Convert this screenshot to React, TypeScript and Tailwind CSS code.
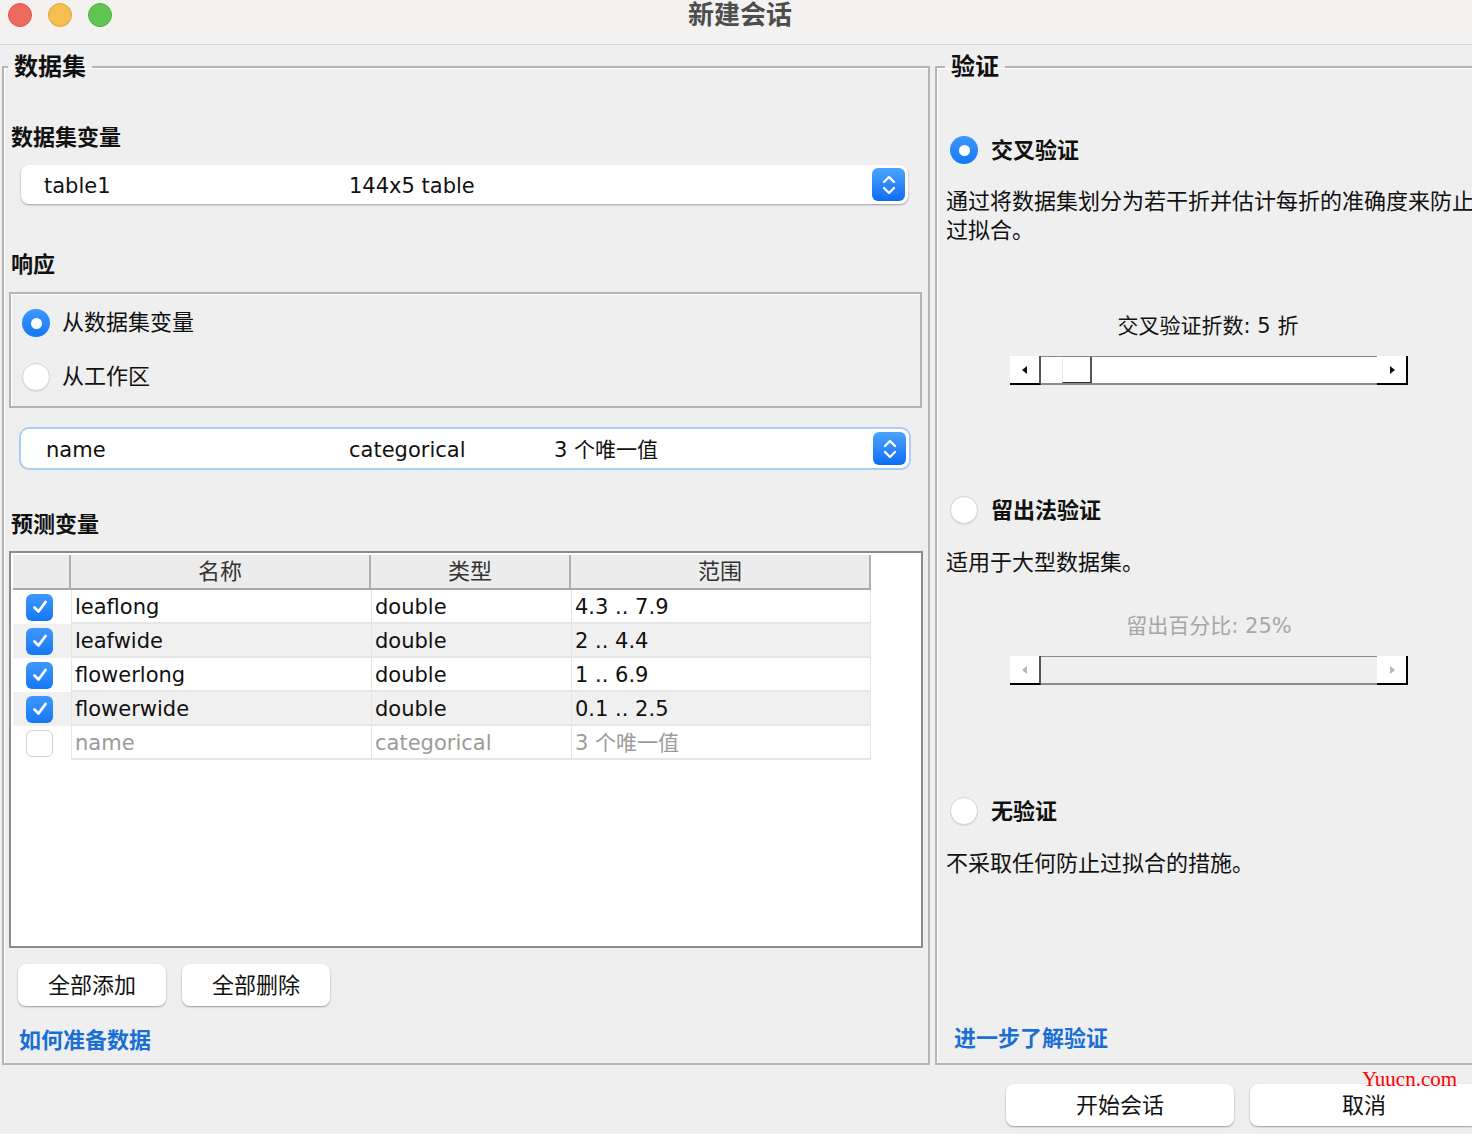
import React from "react";

const FONT = { fontFamily: '"DejaVu Sans", "Noto Sans CJK SC", sans-serif' };

function Chevrons() {
  return (
    <svg width="16" height="22" viewBox="0 0 16 22" fill="none" stroke="white" strokeWidth="2.4" strokeLinecap="round" strokeLinejoin="round">
      <path d="M3 8 L8 3 L13 8" />
      <path d="M3 14 L8 19 L13 14" />
    </svg>
  );
}

function Select({ cells, focused }: { cells: { text: string; x: number }[]; focused?: boolean }) {
  return (
    <div
      className={`relative flex items-center bg-white rounded-[8px] h-[39px] ${
        focused
          ? "shadow-[0_0_0_2px_#a9cdf6,0_1px_2px_rgba(0,0,0,0.2)]"
          : "shadow-[0_1px_2px_rgba(0,0,0,0.35)]"
      }`}
    >
      {cells.map((c) => (
        <span key={c.text} className="absolute top-[6px] leading-[30px] text-[21px] text-[#111]" style={{ left: c.x }}>
          {c.text}
        </span>
      ))}
      <div className="absolute right-[3px] top-[3px] w-[33px] h-[33px] rounded-[6px] bg-gradient-to-b from-[#4ca3ff] to-[#0a6cf5] flex items-center justify-center">
        <Chevrons />
      </div>
    </div>
  );
}

function Radio({ checked }: { checked?: boolean }) {
  return checked ? (
    <div className="w-[28px] h-[28px] rounded-full bg-gradient-to-b from-[#3d98fd] to-[#1577f6] flex items-center justify-center shrink-0">
      <div className="w-[11px] h-[11px] rounded-full bg-white" />
    </div>
  ) : (
    <div className="w-[28px] h-[28px] rounded-full bg-white border border-[#d4d4d4] shadow-[0_1px_1px_rgba(0,0,0,0.08)] shrink-0" />
  );
}

function Check({ checked }: { checked: boolean }) {
  return checked ? (
    <div className="w-[27px] h-[27px] rounded-[6px] bg-gradient-to-b from-[#3d98fd] to-[#1577f6] flex items-center justify-center">
      <svg width="18" height="18" viewBox="0 0 18 18" fill="none" stroke="white" strokeWidth="2.8" strokeLinecap="round" strokeLinejoin="round">
        <path d="M3.5 9.5 L7.5 13.5 L14.5 4" />
      </svg>
    </div>
  ) : (
    <div className="w-[27px] h-[27px] rounded-[6px] bg-white border border-[#d0d0d0]" />
  );
}

function Slider({ enabled }: { enabled: boolean }) {
  const tri = enabled ? "#111" : "#b8b8b8";
  return (
    <div className="flex h-[29px] w-[398px] ml-[64px]">
      <div className="w-[31px] h-full bg-white border-b-2 border-b-black border-r-2 border-r-[#555] flex items-center justify-center">
        <svg width="8" height="10" viewBox="0 0 8 10"><path d="M6 1 L1 5 L6 9 Z" fill={tri} /></svg>
      </div>
      <div className={`flex-1 h-full border-t border-t-[#8a8a8a] border-b-2 border-b-[#8a8a8a] ${enabled ? "bg-white" : "bg-[#efefef]"}`}>
        {enabled && (
          <div className="ml-[21px] w-[30px] h-full bg-white border-l border-l-[#e6e6e6] border-r-2 border-r-[#555] border-b border-b-[#333]" />
        )}
      </div>
      <div className="w-[31px] h-full bg-white border-b-2 border-b-black border-r-2 border-r-black flex items-center justify-center">
        <svg width="8" height="10" viewBox="0 0 8 10"><path d="M2 1 L7 5 L2 9 Z" fill={tri} /></svg>
      </div>
    </div>
  );
}

const rows = [
  { name: "leaflong", type: "double", range: "4.3 .. 7.9", on: true },
  { name: "leafwide", type: "double", range: "2 .. 4.4", on: true },
  { name: "flowerlong", type: "double", range: "1 .. 6.9", on: true },
  { name: "flowerwide", type: "double", range: "0.1 .. 2.5", on: true },
  { name: "name", type: "categorical", range: "3 个唯一值", on: false },
];

function Legend({ children }: { children: React.ReactNode }) {
  return <legend className="-ml-[1px] px-[6px] text-[24px] font-bold leading-[30px] text-[#111]">{children}</legend>;
}

export default function App() {
  return (
    <div className="relative w-[1472px] h-[1134px] overflow-hidden bg-[#efefef]" style={FONT}>
      {/* title bar */}
      <div className="relative h-[45px] bg-[#f3f2f1] border-b border-[#cfcfcf] flex items-center">
        <div className="flex gap-[16px] ml-[8px] -mt-[14px]">
          <div className="w-[24px] h-[24px] rounded-full bg-[#ee6a5e] border border-[#d95a4f]" />
          <div className="w-[24px] h-[24px] rounded-full bg-[#f5bf4f] border border-[#dca73c]" />
          <div className="w-[24px] h-[24px] rounded-full bg-[#61c554] border border-[#50ad44]" />
        </div>
        <div className="absolute left-0 right-0 top-0 text-center text-[26px] font-bold text-[#4d4d4d] leading-[30px] pl-[8px]">新建会话</div>
      </div>

      <div className="flex pt-[7px] h-[1020px]">
        {/* left dataset */}
        <fieldset className="ml-[2px] w-[929px] h-[1013px] border-2 border-[#b4b4b4] shadow-[inset_1px_1px_0_#fff] px-[5px] flex flex-col">
          <Legend>数据集</Legend>
          <div className="mt-[42px] ml-[2px] h-[28px] leading-[28px] text-[22px] font-bold text-[#111]">数据集变量</div>
          <div className="mt-[13px] ml-[12px] w-[887px]">
            <Select cells={[{ text: "table1", x: 23 }, { text: "144x5 table", x: 328 }]} />
          </div>
          <div className="mt-[47px] ml-[2px] h-[28px] leading-[28px] text-[22px] font-bold text-[#111]">响应</div>
          <div className="mt-[13px] h-[116px] w-[913px] border-2 border-[#b4b4b4] shadow-[inset_1px_1px_0_#fff] flex flex-col justify-center gap-[26px] pl-[11px]">
            <div className="flex items-center gap-[12px] h-[28px]">
              <Radio checked />
              <span className="text-[22px] leading-[28px] text-[#111]">从数据集变量</span>
            </div>
            <div className="flex items-center gap-[12px] h-[28px]">
              <Radio />
              <span className="text-[22px] leading-[28px] text-[#111]">从工作区</span>
            </div>
          </div>
          <div className="mt-[21px] ml-[12px] w-[888px]">
            <Select
              focused
              cells={[
                { text: "name", x: 25 },
                { text: "categorical", x: 328 },
                { text: "3 个唯一值", x: 533 },
              ]}
            />
          </div>
          <div className="mt-[43px] ml-[2px] h-[28px] leading-[28px] text-[22px] font-bold text-[#111]">预测变量</div>
          <div className="mt-[12px] h-[397px] w-[914px] border-2 border-[#8c8c8c] bg-white p-[2px]">
            <div className="w-[858px]">
              <div className="grid grid-cols-[58px_300px_200px_300px] h-[35px] bg-[#ececec] border-b-2 border-[#a8a8a8] text-[22px] text-[#333]">
                <div className="border-r-2 border-[#b0b0b0]" />
                <div className="border-r-2 border-[#b0b0b0] flex items-center justify-center">名称</div>
                <div className="border-r-2 border-[#b0b0b0] flex items-center justify-center">类型</div>
                <div className="border-r-2 border-[#b0b0b0] flex items-center justify-center">范围</div>
              </div>
              {rows.map((r, i) => (
                <div
                  key={r.name}
                  className={`grid grid-cols-[58px_300px_200px_300px] grid-rows-[34px] h-[34px] overflow-hidden text-[21px] leading-[26px] ${
                    i % 2 === 1 ? "bg-[#f0f0f0]" : "bg-white"
                  } ${r.on ? "text-[#111]" : "text-[#9b9b9b]"}`}
                >
                  <div className="flex items-center pl-[13px]">
                    <Check checked={r.on} />
                  </div>
                  <div className="border-l border-b-2 border-[#e6e6e6] flex items-center pl-[3px] pt-[2px]">{r.name}</div>
                  <div className="border-l border-b-2 border-[#e6e6e6] flex items-center pl-[3px] pt-[2px]">{r.type}</div>
                  <div className="border-l border-r border-b-2 border-[#e6e6e6] flex items-center pl-[3px] pt-[2px]">{r.range}</div>
                </div>
              ))}
            </div>
          </div>
          <div className="mt-[16px] ml-[9px] flex gap-[16px]">
            <button className="w-[148px] h-[42px] rounded-[8px] bg-white shadow-[0_1px_2px_rgba(0,0,0,0.35)] text-[22px] text-[#111]">全部添加</button>
            <button className="w-[148px] h-[42px] rounded-[8px] bg-white shadow-[0_1px_2px_rgba(0,0,0,0.35)] text-[22px] text-[#111]">全部删除</button>
          </div>
          <div className="mt-[21px] ml-[10px] h-[28px] leading-[28px] text-[22px] font-bold text-[#1a6fd5]">如何准备数据</div>
        </fieldset>

        {/* right validation */}
        <fieldset className="ml-[5px] w-[560px] h-[1013px] border-2 border-[#b4b4b4] shadow-[inset_1px_1px_0_#fff] pl-[9px] flex flex-col">
          <Legend>验证</Legend>
          <div className="mt-[54px] flex items-center gap-[13px] h-[28px] ml-[4px]">
            <Radio checked />
            <span className="text-[22px] font-bold text-[#111]">交叉验证</span>
          </div>
          <div className="mt-[23px] text-[22px] leading-[29px] text-[#111] whitespace-nowrap">
            通过将数据集划分为若干折并估计每折的准确度来防止
            <br />
            过拟合。
          </div>
          <div className="mt-[67px] w-[524px] h-[28px] leading-[28px] text-center text-[21px] text-[#111]">交叉验证折数: 5 折</div>
          <div className="mt-[16px]">
            <Slider enabled />
          </div>
          <div className="mt-[111px] flex items-center gap-[13px] h-[28px] ml-[4px]">
            <Radio />
            <span className="text-[22px] font-bold text-[#111]">留出法验证</span>
          </div>
          <div className="mt-[24px] text-[22px] leading-[29px] text-[#111]">适用于大型数据集。</div>
          <div className="mt-[35px] w-[526px] h-[28px] leading-[28px] text-center text-[21px] text-[#a6a6a6]">留出百分比: 25%</div>
          <div className="mt-[16px]">
            <Slider enabled={false} />
          </div>
          <div className="mt-[112px] flex items-center gap-[13px] h-[28px] ml-[4px]">
            <Radio />
            <span className="text-[22px] font-bold text-[#111]">无验证</span>
          </div>
          <div className="mt-[24px] text-[22px] leading-[29px] text-[#111]">不采取任何防止过拟合的措施。</div>
          <div className="flex-1" />
          <div className="mb-[10px] ml-[8px] h-[28px] leading-[28px] text-[22px] font-bold text-[#1a6fd5]">进一步了解验证</div>
        </fieldset>
      </div>

      {/* bottom buttons */}
      <div className="flex gap-[16px] pl-[1006px] pt-[19px]">
        <button className="shrink-0 w-[228px] h-[42px] rounded-[8px] bg-white shadow-[0_1px_2px_rgba(0,0,0,0.35)] text-[22px] text-[#111]">开始会话</button>
        <button className="shrink-0 w-[228px] h-[42px] rounded-[8px] bg-white shadow-[0_1px_2px_rgba(0,0,0,0.35)] text-[22px] text-[#111]">取消</button>
      </div>
      <div
        className="absolute left-[1362px] top-[1067px] text-[21px] text-[#ff0000] leading-[24px]"
        style={{ fontFamily: '"Liberation Serif", serif' }}
      >
        Yuucn.com
      </div>
    </div>
  );
}
